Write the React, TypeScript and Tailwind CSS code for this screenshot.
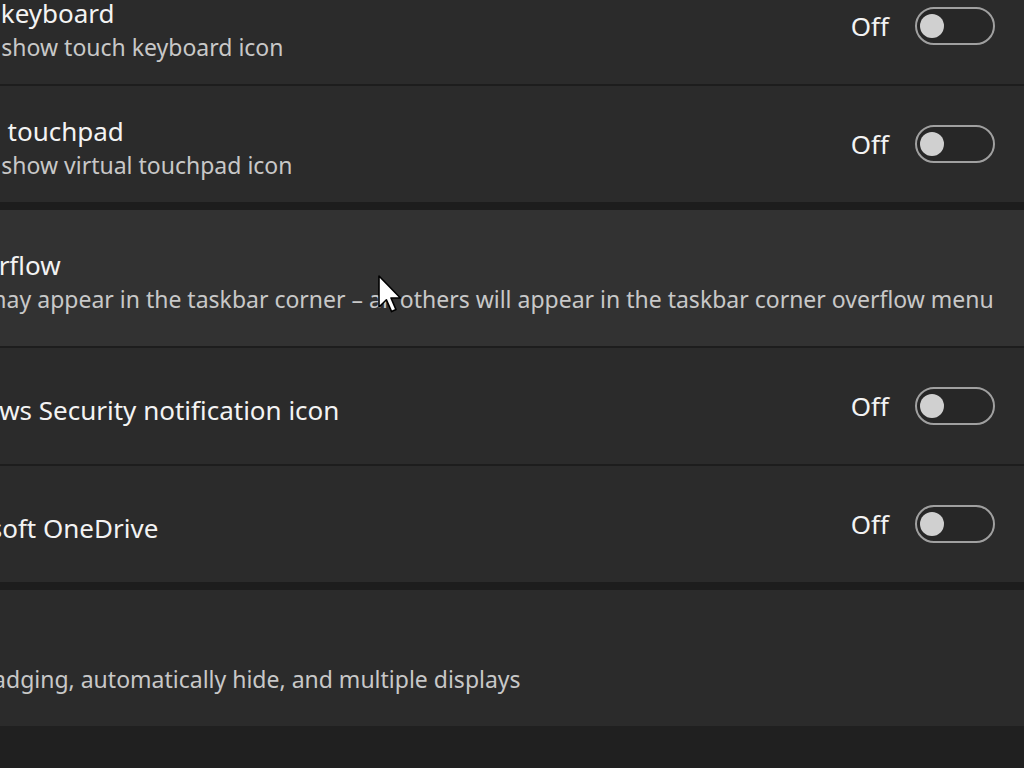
import React from "react";

const font = { fontFamily: '"Noto Sans", "Open Sans", sans-serif' };

function Toggle() {
  return (
    <div className="flex items-center gap-[26px]">
      <span className="text-[26px] text-[#f3f3f3] leading-[34px]">Off</span>
      <div className="w-[80px] h-[38px] rounded-full border-2 border-[#a0a0a0] bg-[#272727] flex items-center pl-[3px]">
        <div className="w-[24px] h-[24px] rounded-full bg-[#d0d0d0]" />
      </div>
    </div>
  );
}

function SubRow({ title, desc, last, first }: { title: string; desc?: string; last?: boolean; first?: boolean }) {
  return (
    <div
      className={
        "flex items-center justify-between pl-[181px] pr-[45px] bg-[#2b2b2b] " +
        (last ? "h-[116px]" : first ? "h-[119px] border-b-2 border-[#1d1d1d]" : "h-[118px] border-b-2 border-[#1d1d1d]")
      }
    >
      <div className="flex flex-col pt-[8px] whitespace-nowrap">
        <span className="text-[26px] leading-[34px] text-[#f3f3f3]">{title}</span>
        {desc && <span className="text-[23px] leading-[34px] text-[#c8c8c8]">{desc}</span>}
      </div>
      <Toggle />
    </div>
  );
}

function HeaderRow({ title, desc, hover }: { title: string; desc: string; hover?: boolean }) {
  return (
    <div
      className={
        "h-[136px] flex items-center pl-[27px] pr-[45px] " + (hover ? "bg-[#323232]" : "bg-[#2b2b2b]")
      }
    >
      <div className="flex flex-col pt-[8px] whitespace-nowrap">
        <span className="text-[26px] leading-[34px] text-[#f3f3f3]">{title}</span>
        <span className="text-[23px] leading-[34px] text-[#c8c8c8]">{desc}</span>
      </div>
    </div>
  );
}

export default function App() {
  return (
    <div className="relative w-[1024px] h-[768px] overflow-hidden bg-[#202020]" style={font}>
      <div className="flex flex-col w-[1300px] -ml-[260px] -mt-[33px]">
        <SubRow title="Touch keyboard" desc="Always show touch keyboard icon" first />
        <SubRow title="Virtual touchpad" desc="Always show virtual touchpad icon" last />
        <div className="h-[8px] bg-[#1d1d1d]" />
        <div className="border-b-2 border-[#1d1d1d]">
          <HeaderRow
            title="Taskbar corner overflow"
            desc="Choose which icons may appear in the taskbar corner – all others will appear in the taskbar corner overflow menu"
            hover
          />
        </div>
        <SubRow title="Windows Security notification icon" />
        <SubRow title="Microsoft OneDrive" last />
        <div className="h-[8px] bg-[#1d1d1d]" />
        <HeaderRow
          title="Taskbar behaviors"
          desc="Taskbar alignment, badging, automatically hide, and multiple displays"
        />
      </div>

      {/* mouse pointer */}
      <svg className="absolute left-[378px] top-[275px]" width="24" height="38" viewBox="0 0 12 19">
        <path d="M0.5 0.5 L0.5 16 L4.2 12.4 L6.8 18.3 L9 17.3 L6.5 11.5 L11.2 11.5 Z" fill="#ffffff" stroke="#000000" strokeWidth="0.8" strokeLinejoin="round" />
      </svg>
    </div>
  );
}
